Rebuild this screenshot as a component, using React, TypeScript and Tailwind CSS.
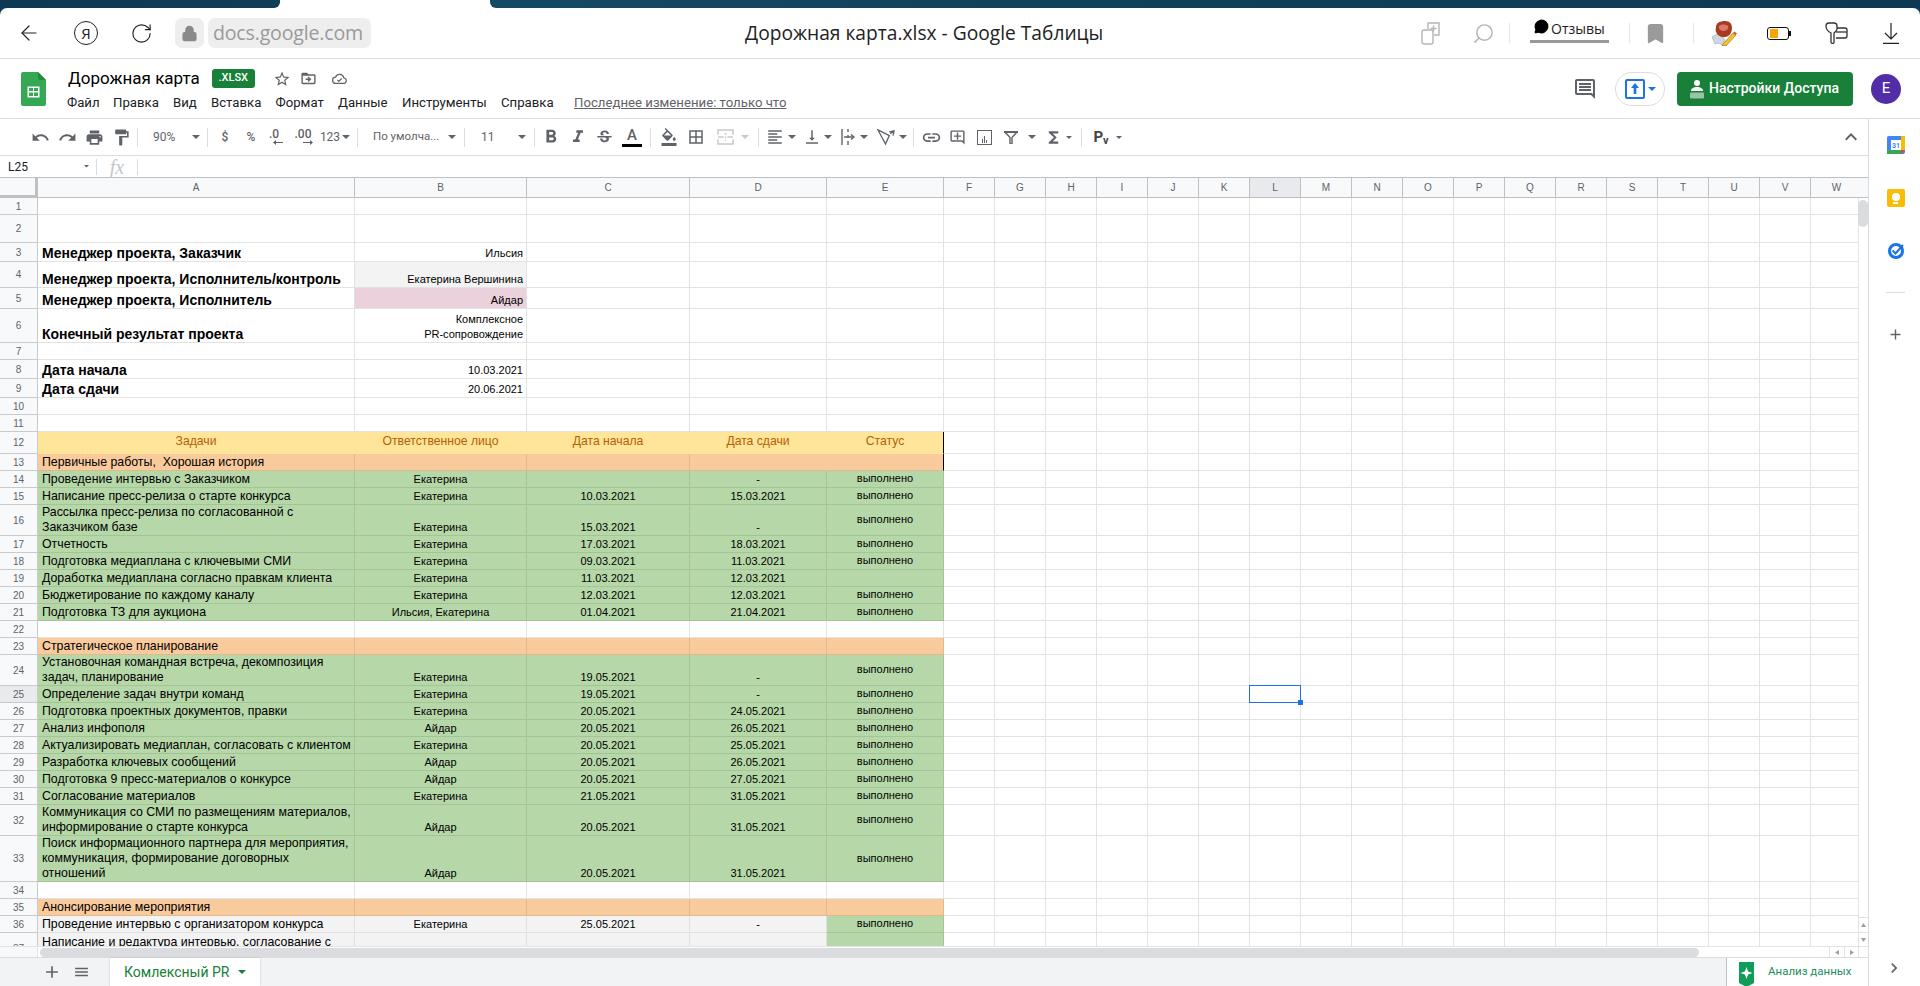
import type { ReactNode } from 'react';
import {
  MdUndo, MdRedo, MdPrint, MdFormatPaint, MdFormatBold, MdFormatItalic, MdStrikethroughS,
  MdFormatColorFill, MdBorderAll, MdFormatAlignLeft, MdVerticalAlignBottom, MdLink,
  MdOutlineAddComment, MdFunctions, MdStarBorder,
  MdDriveFileMoveOutline, MdOutlineComment, MdKeyboardArrowUp, MdAdd, MdMenu, MdChevronRight,
} from 'react-icons/md';
import { ArrowLeft, RotateCw, Lock, Search, Bookmark, MessageCircle } from 'lucide-react';

type Tone = 'plain' | 'head' | 'section' | 'task' | 'grey';

type Row = {
  n: number;
  h: number;
  tone?: Tone;
  a?: string;
  b?: string;
  c?: string;
  d?: string;
  e?: string;
  meta?: boolean;
  bBg?: string;
  noLine?: boolean;
};

const COLS = [
  { name: 'A', w: 317 },
  { name: 'B', w: 172 },
  { name: 'C', w: 163 },
  { name: 'D', w: 137 },
  { name: 'E', w: 117 },
];
const EMPTY_COLS = 'FGHIJKLMNOPQRSTUVW'.split('');
const DONE = 'выполнено';

const ROWS: Row[] = [
  { n: 1, h: 17 },
  { n: 2, h: 28 },
  { n: 3, h: 19, meta: true, a: 'Менеджер проекта, Заказчик', b: 'Ильсия' },
  { n: 4, h: 26, meta: true, a: 'Менеджер проекта, Исполнитель/контроль', b: 'Екатерина Вершинина', bBg: 'bg-[#f3f3f3]' },
  { n: 5, h: 21, meta: true, a: 'Менеджер проекта, Исполнитель', b: 'Айдар', bBg: 'bg-[#ead1dc]' },
  { n: 6, h: 34, meta: true, a: 'Конечный результат проекта', b: 'Комплексное\nPR-сопровождение' },
  { n: 7, h: 17 },
  { n: 8, h: 19, meta: true, a: 'Дата начала', b: '10.03.2021' },
  { n: 9, h: 19, meta: true, a: 'Дата сдачи', b: '20.06.2021' },
  { n: 10, h: 17 },
  { n: 11, h: 17 },
  { n: 12, h: 22, tone: 'head', a: 'Задачи', b: 'Ответственное лицо', c: 'Дата начала', d: 'Дата сдачи', e: 'Статус' },
  { n: 13, h: 17, tone: 'section', a: 'Первичные работы,  Хорошая история', noLine: true },
  { n: 14, h: 17, tone: 'task', a: 'Проведение интервью с Заказчиком', b: 'Екатерина', d: '-', e: DONE },
  { n: 15, h: 17, tone: 'task', a: 'Написание пресс-релиза о старте конкурса', b: 'Екатерина', c: '10.03.2021', d: '15.03.2021', e: DONE },
  { n: 16, h: 31, tone: 'task', a: 'Рассылка пресс-релиза по согласованной с\nЗаказчиком базе', b: 'Екатерина', c: '15.03.2021', d: '-', e: DONE },
  { n: 17, h: 17, tone: 'task', a: 'Отчетность', b: 'Екатерина', c: '17.03.2021', d: '18.03.2021', e: DONE },
  { n: 18, h: 17, tone: 'task', a: 'Подготовка медиаплана с ключевыми СМИ', b: 'Екатерина', c: '09.03.2021', d: '11.03.2021', e: DONE },
  { n: 19, h: 17, tone: 'task', a: 'Доработка медиаплана согласно правкам клиента', b: 'Екатерина', c: '11.03.2021', d: '12.03.2021' },
  { n: 20, h: 17, tone: 'task', a: 'Бюджетирование по каждому каналу', b: 'Екатерина', c: '12.03.2021', d: '12.03.2021', e: DONE },
  { n: 21, h: 17, tone: 'task', a: 'Подготовка ТЗ для аукциона', b: 'Ильсия, Екатерина', c: '01.04.2021', d: '21.04.2021', e: DONE },
  { n: 22, h: 17 },
  { n: 23, h: 17, tone: 'section', a: 'Стратегическое планирование' },
  { n: 24, h: 31, tone: 'task', a: 'Установочная командная встреча, декомпозиция\nзадач, планирование', b: 'Екатерина', c: '19.05.2021', d: '-', e: DONE },
  { n: 25, h: 17, tone: 'task', a: 'Определение задач внутри команд', b: 'Екатерина', c: '19.05.2021', d: '-', e: DONE },
  { n: 26, h: 17, tone: 'task', a: 'Подготовка проектных документов, правки', b: 'Екатерина', c: '20.05.2021', d: '24.05.2021', e: DONE },
  { n: 27, h: 17, tone: 'task', a: 'Анализ инфополя', b: 'Айдар', c: '20.05.2021', d: '26.05.2021', e: DONE },
  { n: 28, h: 17, tone: 'task', a: 'Актуализировать медиаплан, согласовать с клиентом', b: 'Екатерина', c: '20.05.2021', d: '25.05.2021', e: DONE },
  { n: 29, h: 17, tone: 'task', a: 'Разработка ключевых сообщений', b: 'Айдар', c: '20.05.2021', d: '26.05.2021', e: DONE },
  { n: 30, h: 17, tone: 'task', a: 'Подготовка 9 пресс-материалов о конкурсе', b: 'Айдар', c: '20.05.2021', d: '27.05.2021', e: DONE },
  { n: 31, h: 17, tone: 'task', a: 'Согласование материалов', b: 'Екатерина', c: '21.05.2021', d: '31.05.2021', e: DONE },
  { n: 32, h: 31, tone: 'task', a: 'Коммуникация со СМИ по размещениям материалов,\nинформирование о старте конкурса', b: 'Айдар', c: '20.05.2021', d: '31.05.2021', e: DONE },
  { n: 33, h: 46, tone: 'task', a: 'Поиск информационного партнера для мероприятия,\nкоммуникация, формирование договорных\nотношений', b: 'Айдар', c: '20.05.2021', d: '31.05.2021', e: DONE },
  { n: 34, h: 17 },
  { n: 35, h: 17, tone: 'section', a: 'Анонсирование мероприятия' },
  { n: 36, h: 17, tone: 'grey', a: 'Проведение интервью с организатором конкурса', b: 'Екатерина', c: '25.05.2021', d: '-', e: DONE },
  { n: 37, h: 31, tone: 'grey', a: 'Написание и редактура интервью, согласование с\nорганизатором' },
];

const TONE_CELL: Record<Tone, string> = {
  plain: 'border-[#e2e3e3]',
  head: 'bg-[#ffe599] border-[#ffe599] text-[#b45f06] text-[12.2px] pb-[2px]',
  section: 'bg-[#f9cb9c] border-[#e0b98f]',
  task: 'bg-[#b6d7a8] border-[#a4c397]',
  grey: 'bg-[#f3f3f3] border-[#e0e0e0]',
};

const CELL_FONT = "font-['Liberation_Sans',Arial,sans-serif]";

function Caret({ color = '#5f6368', size = 8 }: { color?: string; size?: number }) {
  return (
    <svg width={size} height={size / 2} viewBox="0 0 8 4" className="shrink-0">
      <path d="M0 0h8L4 4z" fill={color} />
    </svg>
  );
}

function Cell({ tone = 'plain', w, children, className = '' }: { tone?: Tone; w: number; children?: ReactNode; className?: string }) {
  return (
    <div
      style={{ width: w }}
      className={`shrink-0 h-full border-r border-b overflow-hidden whitespace-pre leading-[15px] flex flex-col ${TONE_CELL[tone]} ${className}`}
    >
      {children}
    </div>
  );
}

function SheetRow({ row }: { row: Row }) {
  const active = row.n === 25;
  const isHead = row.tone === 'head';
  const small = 'text-[11px] text-center px-[2px]';
  const mid = isHead ? 'justify-center items-center' : `${small} justify-end`;
  const eTone: Tone | undefined = row.tone === 'grey' ? 'task' : row.tone;
  const blackEdge = row.n === 12 || row.n === 13 ? 'border-r-black' : '';
  return (
    <div style={{ height: row.h }} className={`flex shrink-0 text-black ${CELL_FONT}`}>
      <div className={`w-[38px] shrink-0 border-r border-b border-[#c8cacc] flex items-center justify-center text-[10px] text-[#5f6368] ${active ? 'bg-[#e8eaed]' : 'bg-[#f8f9fa]'}`}>
        {row.n}
      </div>
      <Cell
        tone={row.tone}
        w={COLS[0].w}
        className={`${isHead ? 'justify-center items-center' : 'pl-[4px] justify-end'} ${row.meta ? 'font-bold text-[14px]' : isHead ? '' : 'text-[12.35px]'} ${row.n === 37 ? '!justify-start pt-[2px]' : ''}`}
      >
        {row.a}
      </Cell>
      <Cell tone={row.tone} w={COLS[1].w} className={`${row.meta ? 'text-[11px] text-right pr-[3px] justify-end' : mid} ${row.bBg ?? ''}`}>
        {row.b}
      </Cell>
      <Cell tone={row.tone} w={COLS[2].w} className={mid}>
        {row.c}
      </Cell>
      <Cell tone={row.tone} w={COLS[3].w} className={`${mid} ${row.noLine ? 'border-r-[#f9cb9c]' : ''}`}>
        {row.d}
      </Cell>
      <Cell tone={eTone} w={COLS[4].w} className={`${isHead || !row.tone ? 'justify-center items-center' : `${small} justify-center pb-[1px]`} ${blackEdge}`}>
        {row.e}
      </Cell>
      {EMPTY_COLS.map((c) => (
        <div key={c} className="relative w-[51px] shrink-0 h-full border-r border-b border-[#e2e3e3]">
          {active && c === 'L' && (
            <div className="absolute z-10 -left-px -top-px w-[52px] h-[18px] border border-[#1a73e8]">
              <div className="absolute -right-[3px] -bottom-[3px] w-[5px] h-[5px] bg-[#1a73e8]" />
            </div>
          )}
        </div>
      ))}
    </div>
  );
}

function Tool({ w, children, className = '' }: { w: number; children?: ReactNode; className?: string }) {
  return (
    <div style={{ width: w }} className={`shrink-0 flex items-center justify-center ${className}`}>
      {children}
    </div>
  );
}

const Sep = ({ ml = 0 }: { ml?: number }) => <div style={{ marginLeft: ml }} className="w-px h-[19px] bg-[#dadce0] shrink-0" />;

function SheetsLogo() {
  return (
    <svg width="25" height="34" viewBox="0 0 25 34">
      <path d="M2 0h15l8 8v24a2 2 0 0 1-2 2H2a2 2 0 0 1-2-2V2a2 2 0 0 1 2-2z" fill="#34a853" />
      <path d="M17 0l8 8h-6a2 2 0 0 1-2-2z" fill="#1e8e3e" />
      <path d="M6.5 14.5h12v11h-12z M8 16v3h4v-3z M13 16v3h4v-3z M8 20.5v3.5h4v-3.5z M13 20.5v3.5h4v-3.5z" fill="#fff" fillRule="evenodd" />
    </svg>
  );
}

function YandexIcon() {
  return (
    <div className="w-[24px] h-[24px] rounded-full border-[1.5px] border-[#222] flex items-center justify-center text-[15px] leading-none text-[#222] font-['Open_Sans',sans-serif]">
      Я
    </div>
  );
}

function Mascot() {
  return (
    <svg width="26" height="25" viewBox="0 0 26 25">
      <path d="M1 16l5-3 6 3 2 3-2 5-5-2-3 1z" fill="#cfd8e0" stroke="#9aa7b0" strokeWidth="0.6" />
      <path d="M5 6c0-4 4-6 9-6 5 0 7 3 7 7s-2 7-4 8c-3 2-8 1-10-1-2-2-3-5-2-8z" fill="#a83a22" />
      <path d="M8 5c2-2 7-2 9 0 1 2-1 5-4 5s-6-2-5-5z" fill="#d8796a" />
      <path d="M12 23l10-11 3 2-10 11-4 0z" fill="#f2c230" stroke="#8a6d10" strokeWidth="0.6" />
      <path d="M22 12l1.5-1.5 2.5 2-1.500 1.500z" fill="#e0563c" />
    </svg>
  );
}

function Battery() {
  return (
    <div className="flex items-center">
      <div className="w-[22px] h-[13px] border-[1.5px] border-[#111] rounded-[3px] pl-[2px] py-[1px] flex">
        <div className="w-[8px] h-full bg-[#f9a400]" />
      </div>
      <div className="w-[2px] h-[5px] bg-[#111]" />
    </div>
  );
}

function Pods() {
  return (
    <svg width="23" height="22" viewBox="0 0 23 22" fill="none" stroke="#333" strokeWidth="1.3">
      <path d="M1 4a3 3 0 0 1 3-3h5a3 3 0 0 1 3 3v3c0 2-2 3-3 4v9a1.500 1.500 0 0 1-3 0v-9C4 10 1 8 1 4z" />
      <path d="M12 6h8a2 2 0 0 1 2 2v6a2 2 0 0 1-2 2h-9" />
      <path d="M11 10h11" />
    </svg>
  );
}

function DownloadArrow() {
  return (
    <svg width="16" height="21" viewBox="0 0 16 21" fill="none" stroke="#222" strokeWidth="1.2">
      <path d="M8 0v16M2 10l6 6 6-6M0 20.300h16" />
    </svg>
  );
}

function BrowserBar() {
  return (
    <div className="relative h-[51px] shrink-0 bg-white rounded-t-[7px] border-b border-[#dcdcdc] flex items-center text-[#222]">
      <Tool w={58}><ArrowLeft size={24} strokeWidth={1.2} /></Tool>
      <Tool w={56}><YandexIcon /></Tool>
      <Tool w={54}><RotateCw size={23} strokeWidth={1.2} /></Tool>
      <div className="ml-[7px] w-[29px] h-[30px] rounded-[7px] bg-[#eeeeee] flex items-center justify-center">
        <Lock size={17} fill="#8a8a8a" stroke="#8a8a8a" />
      </div>
      <div className="ml-[4px] w-[163px] h-[30px] rounded-[7px] bg-[#eeeeee] pl-[5px] flex items-center text-[19.6px] text-[#9a9a9a] font-['Open_Sans',sans-serif] tracking-[-0.2px]">
        docs.google.com
      </div>
      <div className="w-[374px] shrink-0" />
      <div className="text-[19.2px] text-[#222] whitespace-nowrap font-['Open_Sans',sans-serif]">Дорожная карта.xlsx - Google Таблицы</div>
      <div className="ml-auto flex items-center h-full">
        <Tool w={24} className="mr-[28px]">
          <svg width="20" height="24" viewBox="0 0 20 24" fill="none" stroke="#b5b5b5" strokeWidth="1.4">
            <path d="M7 8V2h11v12h-5" />
            <rect x="1" y="9" width="11" height="14" rx="2" />
            <path d="M12.500 4.500v6M9.500 7.500h6" />
          </svg>
        </Tool>
        <Tool w={24} className="mr-[14px] text-[#b5b5b5]"><Search size={23} strokeWidth={1.5} className="-scale-x-100" /></Tool>
        <div className="w-px h-[20px] bg-[#e5e5e5]" />
        <div className="ml-[20px] w-[79px] h-full relative flex items-center pl-[21px] text-[14px] text-[#222] font-['Open_Sans',sans-serif]">
          <MessageCircle size={15} fill="#000" stroke="#000" className="absolute left-[4px] top-[11px]" />
          <span className="-mt-[9px] whitespace-nowrap">Отзывы</span>
          <div className="absolute left-0 right-0 top-[32px] h-[3px] bg-[#999]" />
        </div>
        <div className="ml-[20px] w-px h-[20px] bg-[#e5e5e5]" />
        <Tool w={50} className="mr-[13px]"><Bookmark size={23} fill="#9a9a9a" stroke="#9a9a9a" /></Tool>
        <div className="mr-[15px] w-px h-[20px] bg-[#e5e5e5]" />
        <Tool w={30} className="mr-[27px]"><Mascot /></Tool>
        <Tool w={26} className="mr-[30px]"><Battery /></Tool>
        <Tool w={28} className="mr-[27px]"><Pods /></Tool>
        <Tool w={28} className="mr-[15px]"><DownloadArrow /></Tool>
      </div>
    </div>
  );
}

const MENU = [
  { label: 'Файл', w: 46 },
  { label: 'Правка', w: 60 },
  { label: 'Вид', w: 38 },
  { label: 'Вставка', w: 64.5 },
  { label: 'Формат', w: 62.5 },
  { label: 'Данные', w: 64 },
  { label: 'Инструменты', w: 99 },
  { label: 'Справка', w: 73 },
];

function DocHeader() {
  return (
    <div className="h-[60px] shrink-0 border-b border-[#dadce0] flex items-center pl-[21px] pr-[19px] font-['Roboto',sans-serif]">
      <SheetsLogo />
      <div className="ml-[21px] flex flex-col h-full">
        <div className="flex items-center h-[19px] mt-[10px]">
          <span className="ml-[1px] text-[17px] leading-none text-black">Дорожная карта</span>
          <span className="ml-[12px] w-[43px] h-[19px] rounded-[3px] bg-[#188038] text-white text-[11px] font-medium flex items-center justify-center">.XLSX</span>
          <MdStarBorder size={18} className="ml-[18px] text-[#5f6368]" />
          <MdDriveFileMoveOutline size={17} className="ml-[9px] text-[#5f6368]" />
          <svg width="17" height="17" viewBox="0 0 24 24" fill="none" stroke="#5f6368" strokeWidth="1.8" className="ml-[14px]">
            <path d="M7 19a4.500 4.500 0 0 1-.5-9A6 6 0 0 1 18 11a4 4 0 0 1-1 8z" />
            <path d="M9 14l2 2 4-4" />
          </svg>
        </div>
        <div className="flex items-center mt-[7px] h-[16px] text-[13.2px] text-[#202124] whitespace-nowrap">
          {MENU.map((m) => (
            <span key={m.label} style={{ width: m.w }}>{m.label}</span>
          ))}
          <span className="underline text-[#5f6368]">Последнее изменение: только что</span>
        </div>
      </div>
      <div className="ml-auto flex items-center">
        <MdOutlineComment size={24} className="text-[#5f6368] mr-[18px]" />
        <div className="w-[50px] h-[34px] rounded-full border border-[#dadce0] flex items-center justify-center gap-[3px] mr-[12px]">
          <div className="w-[20px] h-[20px] border-2 border-[#1a73e8] rounded-[2px] flex items-center justify-center text-[#1a73e8]">
            <svg width="10" height="11" viewBox="0 0 10 11"><path d="M5 0l4 5H6.300v6H3.700V5H1z" fill="#1a73e8" /></svg>
          </div>
          <Caret color="#1a73e8" />
        </div>
        <div className="w-[176px] h-[34px] rounded-[4px] bg-[#188038] text-white text-[14px] font-medium flex items-center pl-[13px] gap-[5px]">
          <svg width="14" height="20" viewBox="0 0 14 20"><circle cx="7" cy="4" r="3" fill="#fff" /><path d="M1 12c0-3 3-4 6-4s6 1 6 4z" fill="#fff" /><rect x="0" y="13.500" width="14" height="6" rx="1" fill="#fff" fillOpacity="0.55" /></svg>
          Настройки Доступа
        </div>
        <div className="ml-[18px] w-[30px] h-[30px] rounded-full bg-[#512da8] text-white text-[15px] flex items-center justify-center">E</div>
      </div>
    </div>
  );
}

function Toolbar() {
  return (
    <div className="h-[37px] shrink-0 border-b border-[#dadce0] flex items-center pl-[27px] pr-[5px] font-['Roboto',sans-serif] text-[#5f6368]">
      <Tool w={27}><MdUndo size={19} /></Tool>
      <Tool w={27}><MdRedo size={19} /></Tool>
      <Tool w={27}><MdPrint size={19} /></Tool>
      <Tool w={27}><MdFormatPaint size={19} /></Tool>
      <Sep ml={2} />
      <Tool w={69} className="!justify-between pl-[15px] pr-[7px] text-[12px]"><span>90%</span><Caret /></Tool>
      <Sep />
      <Tool w={34} className="text-[12px] font-medium">$</Tool>
      <Tool w={18} className="text-[12px] font-medium">%</Tool>
      <Tool w={28} className="flex-col text-[12px] font-medium leading-[11px]">
        <span>.0</span>
        <svg width="10" height="5" viewBox="0 0 10 5" className="ml-[8px]"><path d="M3 0v2h7v1H3v2L0 2.500z" fill="#5f6368" /></svg>
      </Tool>
      <Tool w={30} className="flex-col text-[12px] font-medium leading-[11px]">
        <span>.00</span>
        <svg width="10" height="5" viewBox="0 0 10 5" className="ml-[10px]"><path d="M7 0v2H0v1h7v2l3-2.500z" fill="#5f6368" /></svg>
      </Tool>
      <Tool w={34} className="text-[12px] gap-[2px]"><span>123</span><Caret /></Tool>
      <Sep ml={5} />
      <Tool w={106} className="!justify-between pl-[15px] pr-[8px] text-[11.5px]"><span>По умолча...</span><Caret /></Tool>
      <Sep />
      <Tool w={69} className="!justify-between pl-[16px] pr-[8px] text-[12px]"><span>11</span><Caret /></Tool>
      <Sep />
      <Tool w={32}><MdFormatBold size={22} /></Tool>
      <Tool w={22}><MdFormatItalic size={20} /></Tool>
      <Tool w={30}><MdStrikethroughS size={19} /></Tool>
      <Tool w={26} className="flex-col">
        <span className="text-[15px] leading-[17px] font-medium">A</span>
        <div className="w-[20px] h-[3px] bg-black" />
      </Tool>
      <Sep ml={5} />
      <Tool w={36}><MdFormatColorFill size={18} /></Tool>
      <Tool w={18}><MdBorderAll size={18} /></Tool>
      <Tool w={30} className="ml-[5px]">
        <svg width="17" height="16" viewBox="0 0 18 17" fill="none" stroke="#c8c9cb" strokeWidth="1.6"><path d="M1 6V1h16v5M1 11v5h16v-5M1 8.500h6M11 8.500h6" /><path d="M9 4v9" strokeDasharray="2 2" /></svg>
      </Tool>
      <Tool w={10}><Caret color="#c8c9cb" /></Tool>
      <Sep ml={8} />
      <Tool w={26} className="ml-[3px]"><MdFormatAlignLeft size={18} /></Tool>
      <Tool w={8}><Caret /></Tool>
      <Tool w={24} className="ml-[4px]"><MdVerticalAlignBottom size={18} /></Tool>
      <Tool w={8}><Caret /></Tool>
      <Tool w={24} className="ml-[4px]">
        <svg width="15" height="16" viewBox="0 0 15 16" fill="none" stroke="#5f6368" strokeWidth="1.4"><path d="M1 0v16M7 0v3M7 6v3M7 12v4M3 8h9" /><path d="M10 5.500L13 8l-3 2.500" /></svg>
      </Tool>
      <Tool w={8}><Caret /></Tool>
      <Tool w={26} className="ml-[5px]">
        <svg width="18" height="17" viewBox="0 0 19 18" fill="none" stroke="#5f6368" strokeWidth="1.4"><path d="M1 1l8 15 4-9zM1 1l12 6" /><path d="M13 3l5-1-1 5M18 2l-4 3" /></svg>
      </Tool>
      <Tool w={8}><Caret /></Tool>
      <Sep ml={6} />
      <Tool w={34}><MdLink size={21} /></Tool>
      <Tool w={18}><MdOutlineAddComment size={17} /></Tool>
      <Tool w={36}>
        <div className="w-[15px] h-[15px] border-[1.5px] border-[#5f6368] flex items-end justify-center gap-[1px] pb-[1px]">
          <div className="w-px h-[4px] bg-[#5f6368]" />
          <div className="w-px h-[7px] bg-[#5f6368]" />
          <div className="w-px h-[3px] bg-[#5f6368]" />
        </div>
      </Tool>
      <Tool w={18}>
        <svg width="14" height="13" viewBox="0 0 14 13" fill="none" stroke="#5f6368"><path d="M1 1h12L8 6.500V13H6V6.500z" strokeWidth="1.4" /><path d="M0 1h14" strokeWidth="2" /></svg>
      </Tool>
      <Tool w={8} className="ml-[8px]"><Caret /></Tool>
      <Tool w={22} className="ml-[6px]"><MdFunctions size={19} /></Tool>
      <Tool w={10}><Caret size={6} /></Tool>
      <Sep ml={7} />
      <Tool w={30} className="ml-[4px] text-[15px] font-bold text-[#444] items-end">
        P<span className="text-[11px] leading-[15px]">v</span>
      </Tool>
      <Tool w={6}><Caret size={6} /></Tool>
      <div className="ml-auto text-[#5f6368]"><MdKeyboardArrowUp size={24} /></div>
    </div>
  );
}

function FormulaBar() {
  return (
    <div className="h-[22px] shrink-0 border-b border-[#c0c0c0] flex items-center font-['Roboto',sans-serif]">
      <div className="w-[96px] flex items-center justify-between pl-[8px] pr-[7px] text-[12px] text-[#202124]">
        L25
        <Caret size={5} />
      </div>
      <div className="w-px h-[16px] bg-[#dadce0]" />
      <div className="w-[40px] text-center text-[20px] leading-none italic text-[#c4c7c9] font-['Liberation_Serif',serif]">fx</div>
      <div className="w-px h-[16px] bg-[#dadce0]" />
    </div>
  );
}

function ColumnHeader() {
  return (
    <div className={`h-[20px] shrink-0 flex bg-[#f8f9fa] border-b border-[#c0c0c0] text-[10px] text-[#5f6368] ${CELL_FONT}`}>
      <div className="w-[38px] shrink-0 border-r-[3px] border-b-[3px] border-[#c0c0c0] h-[20px]" />
      {COLS.map((c) => (
        <div key={c.name} style={{ width: c.w }} className="shrink-0 border-r border-[#c0c0c0] flex items-center justify-center">{c.name}</div>
      ))}
      {EMPTY_COLS.map((c) => (
        <div key={c} className={`w-[51px] shrink-0 border-r border-[#c0c0c0] flex items-center justify-center last:border-r-0 ${c === 'L' ? 'bg-[#e8eaed]' : ''}`}>{c}</div>
      ))}
    </div>
  );
}

function Grid() {
  return (
    <div className="flex-1 min-h-0 flex flex-col">
      <ColumnHeader />
      <div className="flex-1 min-h-0 flex">
        <div className="flex-1 min-w-0 overflow-hidden flex flex-col">
          {ROWS.map((r) => <SheetRow key={r.n} row={r} />)}
        </div>
        <div className="w-[10px] shrink-0 flex flex-col border-l border-[#e2e3e3] bg-white">
          <div className="mt-[2px] h-[27px] rounded-full bg-[#dadce0] -ml-px" />
          <div className="flex-1" />
          <div className="h-[15px] border-t border-[#e2e3e3] flex items-center justify-center"><svg width="5" height="4" viewBox="0 0 5 4"><path d="M2.500 0L5 4H0z" fill="#9aa0a6" /></svg></div>
          <div className="h-[14px] border-t border-[#e2e3e3] flex items-center justify-center"><svg width="5" height="4" viewBox="0 0 5 4"><path d="M2.500 4L5 0H0z" fill="#9aa0a6" /></svg></div>
        </div>
      </div>
      <div className="h-[11px] shrink-0 flex border-t border-[#e2e3e3] bg-white">
        <div className="w-[38px] border-r border-[#e2e3e3] bg-[#f8f9fa]" />
        <div className="flex-1 flex items-center pl-[2px]">
          <div className="w-[1659px] h-[9px] rounded-full bg-[#dadce0]" />
        </div>
        <div className="w-[15px] border-l border-[#e2e3e3] flex items-center justify-center"><svg width="4" height="5" viewBox="0 0 4 5"><path d="M0 2.500L4 0v5z" fill="#9aa0a6" /></svg></div>
        <div className="w-[14px] border-l border-[#e2e3e3] flex items-center justify-center"><svg width="4" height="5" viewBox="0 0 4 5"><path d="M4 2.500L0 0v5z" fill="#9aa0a6" /></svg></div>
        <div className="w-[10px] border-l border-[#e2e3e3]" />
      </div>
    </div>
  );
}

function SheetTabs() {
  return (
    <div className="h-[29px] shrink-0 bg-[#f1f3f4] border-t border-[#dadce0] flex font-['Roboto',sans-serif]">
      <Tool w={42} className="ml-[31px] text-[#5f6368]"><MdAdd size={20} /></Tool>
      <Tool w={17} className="text-[#5f6368]"><MdMenu size={20} /></Tool>
      <div className="ml-[20px] w-[150px] bg-white flex items-center pl-[14px] text-[14px] text-[#188038] shadow-[0_0_2px_rgba(0,0,0,0.2)]">
        Комлексный PR
        <span className="ml-[9px]"><Caret color="#188038" /></span>
      </div>
      <div className="ml-auto w-[142px] bg-white border-l border-[#c0c0c0] flex items-center pl-[11px] text-[11.500px] text-[#1e8e5a]">
        <svg width="17" height="26" viewBox="0 0 17 26" className="mt-[3px]">
          <path d="M1 1h15v21l-7.500 4L1 22z" fill="#0f9d58" />
          <path d="M8.500 6l1.600 4.400 4.400 1.600-4.400 1.600-1.600 4.400-1.600-4.400L2.500 12l4.400-1.600z" fill="#fff" />
        </svg>
        <span className="ml-[13px] whitespace-nowrap">Анализ данных</span>
      </div>
    </div>
  );
}

function SidePanel() {
  return (
    <div className="w-[52px] shrink-0 border-l border-[#dadce0] flex flex-col items-center pt-[17px] relative">
      <svg width="18" height="18" viewBox="0 0 18 18" className="ml-[2px]">
        <rect width="18" height="18" rx="2" fill="#4285f4" />
        <rect x="4" y="4" width="10" height="10" fill="#fff" />
        <rect x="14" y="0" width="4" height="14" fill="#fbbc04" />
        <rect x="0" y="14" width="14" height="4" fill="#34a853" />
        <path d="M14 14h4l-4 4z" fill="#ea4335" />
        <text x="9" y="12" fontSize="7" textAnchor="middle" fill="#4285f4" fontFamily="Roboto" fontWeight="700">31</text>
      </svg>
      <div className="mt-[35px] ml-[2px] w-[18px] h-[18px] rounded-[2px] bg-[#fbbc04] flex flex-col items-center justify-center">
        <div className="w-[8px] h-[8px] rounded-full bg-white" />
        <div className="w-[5px] h-[2px] bg-white mt-[1px]" />
      </div>
      <svg width="18" height="18" viewBox="0 0 18 18" className="mt-[34px] ml-[2px]" fill="none">
        <circle cx="9" cy="10" r="6.500" stroke="#1a73e8" strokeWidth="3" />
        <path d="M5.500 9.500l3 3L16 4" stroke="#1a73e8" strokeWidth="2" />
      </svg>
      <div className="mt-[33px] ml-[2px] w-[19px] h-px bg-[#dadce0]" />
      <MdAdd size={17} className="mt-[33px] ml-[2px] text-[#5f6368]" />
      <MdChevronRight size={20} className="absolute left-[15px] bottom-[8px] text-[#5f6368]" />
    </div>
  );
}

export default function App() {
  return (
    <div className="w-[1920px] h-[986px] overflow-hidden flex flex-col bg-[#0f3d55]">
      <div className="h-[8px] shrink-0 flex bg-white">
        <div className="w-[280px] rounded-br-[6px] bg-gradient-to-r from-[#0d3a52] to-[#0f3d55]" />
        <div className="w-[210px]" />
        <div className="flex-1 rounded-bl-[6px] bg-gradient-to-r from-[#154a64] via-[#0f3f59] to-[#0d3a52]" />
      </div>
      <BrowserBar />
      <div className="flex-1 min-h-0 flex flex-col bg-white">
        <DocHeader />
        <div className="flex-1 min-h-0 flex">
          <div className="flex-1 min-w-0 flex flex-col">
            <Toolbar />
            <FormulaBar />
            <Grid />
            <SheetTabs />
          </div>
          <SidePanel />
        </div>
      </div>
    </div>
  );
}
